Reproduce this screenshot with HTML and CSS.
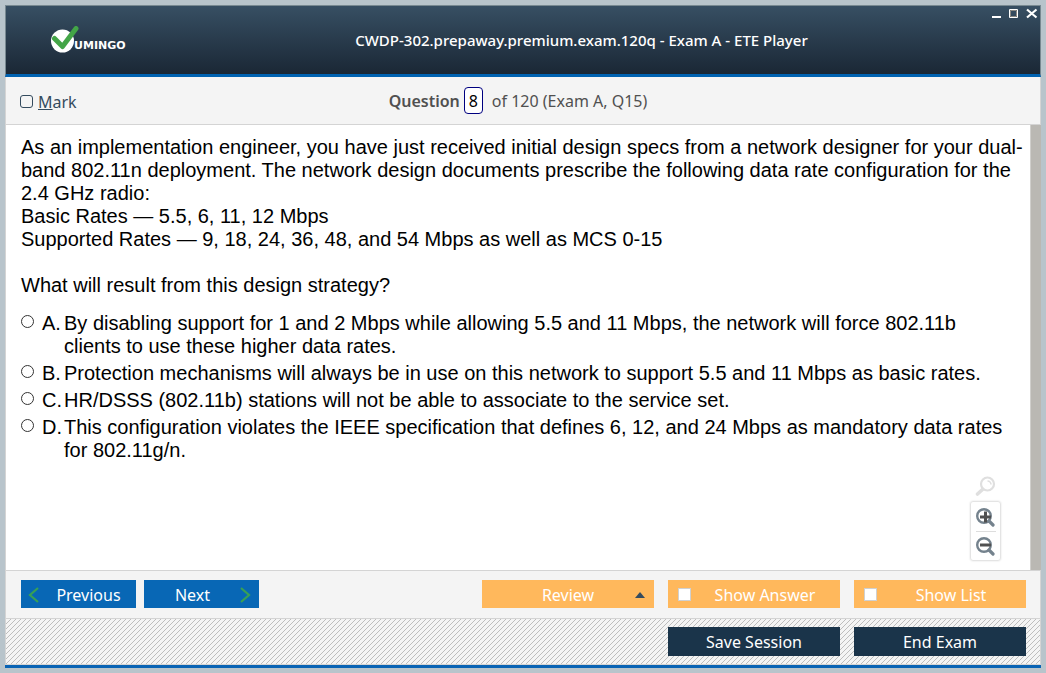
FILE: index.html
```html
<!DOCTYPE html>
<html lang="en">
<head>
<meta charset="utf-8">
<meta name="viewport" content="width=device-width, initial-scale=1">
<title>CWDP-302.prepaway.premium.exam.120q - Exam A - ETE Player</title>
<link rel="stylesheet" href="styles.css">
</head>
<body>
<div class="window">
  <header class="titlebar">
    <svg class="logo" viewBox="0 0 80 28" role="img" aria-label="Vumingo">
      <circle cx="11.500" cy="15" r="11.500" fill="#fff"/>
      <path d="M3.500 12.500 L11.500 20.500 L25 2.500" fill="none" stroke="#43a547" stroke-width="5" stroke-linecap="round" stroke-linejoin="round"/>
      <text class="logo-text" x="23" y="23">UMINGO</text>
    </svg>
    <h1 class="title">CWDP-302.prepaway.premium.exam.120q - Exam A - ETE Player</h1>
    <div class="window-controls">
      <button class="control" type="button" aria-label="Minimize"><svg viewBox="0 0 12 12"><path d="M2 9h9v2H2z" fill="#fff"/></svg></button>
      <button class="control" type="button" aria-label="Maximize"><svg viewBox="0 0 12 12"><path d="M1.500 2.500h8v8h-8z" fill="none" stroke="#fff"/><path d="M2.500 3.500h6v6h-6z" fill="none" stroke="#8c8983"/></svg></button>
      <button class="control" type="button" aria-label="Close"><svg viewBox="0 0 12 12"><path d="M1 2.500 L10.500 10.500 M10.500 2.500 L1 10.500" stroke="#fff" stroke-width="2.200"/></svg></button>
    </div>
  </header>

  <div class="infobar">
    <label class="mark"><input class="mark-box" type="checkbox"><span><u>M</u>ark</span></label>
    <div class="counter">
      <label class="counter-label" for="question-number">Question</label>
      <input class="counter-input" id="question-number" type="text" value="8">
      <span>of 120 (Exam A, Q15)</span>
    </div>
  </div>

  <main class="content">
    <div class="question">
      <p>As an implementation engineer, you have just received initial design specs from a network designer for your dual-<br>band 802.11n deployment. The network design documents prescribe the following data rate configuration for the<br>2.4 GHz radio:</p>
      <p>Basic Rates — 5.5, 6, 11, 12 Mbps</p>
      <p>Supported Rates — 9, 18, 24, 36, 48, and 54 Mbps as well as MCS 0-15</p>
      <p class="prompt">What will result from this design strategy?</p>
      <div class="answers">
        <label class="answer"><input class="radio" type="radio" name="answer"><span>A.</span><span>By disabling support for 1 and 2 Mbps while allowing 5.5 and 11 Mbps, the network will force 802.11b<br>clients to use these higher data rates.</span></label>
        <label class="answer"><input class="radio" type="radio" name="answer"><span>B.</span><span>Protection mechanisms will always be in use on this network to support 5.5 and 11 Mbps as basic rates.</span></label>
        <label class="answer"><input class="radio" type="radio" name="answer"><span>C.</span><span>HR/DSSS (802.11b) stations will not be able to associate to the service set.</span></label>
        <label class="answer"><input class="radio" type="radio" name="answer"><span>D.</span><span>This configuration violates the IEEE specification that defines 6, 12, and 24 Mbps as mandatory data rates<br>for 802.11g/n.</span></label>
      </div>
    </div>
    <div class="scrollbar"></div>
    <div class="zoom">
      <button class="zoom-reset" type="button" aria-label="Reset zoom"><svg viewBox="0 0 22 22"><circle cx="12.500" cy="9" r="6.500" fill="none" stroke="#dfdfdf" stroke-width="2.200"/><path d="M7.500 14.500 L2.500 19" stroke="#dfdfdf" stroke-width="3.600" stroke-linecap="round"/><path d="M12.500 6a3.500 3.500 0 0 1 3.500 3.500" fill="none" stroke="#dfdfdf" stroke-width="1.600"/></svg></button>
      <div class="zoom-group">
        <button class="zoom-button" type="button" aria-label="Zoom in"><svg viewBox="0 0 20 20"><circle cx="8" cy="9" r="6.800" fill="none" stroke="#74828d" stroke-width="2.400"/><path d="M13 14l4 4" stroke="#74828d" stroke-width="3.200" stroke-linecap="round"/><path d="M4 10h11M9.500 4.500v11" stroke="#505050" stroke-width="3"/></svg></button>
        <button class="zoom-button" type="button" aria-label="Zoom out"><svg viewBox="0 0 20 20"><circle cx="8" cy="9" r="6.800" fill="none" stroke="#74828d" stroke-width="2.400"/><path d="M13 14l4 4" stroke="#74828d" stroke-width="3.200" stroke-linecap="round"/><path d="M4 9h11" stroke="#505050" stroke-width="3"/></svg></button>
      </div>
    </div>
  </main>

  <nav class="actions">
    <button class="button nav" type="button"><svg class="chevron" viewBox="0 0 12 18"><path d="M10 2L2 9l8 7" fill="none" stroke="#38a055" stroke-width="2.200"/></svg><span>Previous</span></button>
    <button class="button nav" type="button"><span>Next</span><svg class="chevron" viewBox="0 0 12 18"><path d="M2 2l8 7-8 7" fill="none" stroke="#38a055" stroke-width="2.200"/></svg></button>
    <button class="button option review" type="button"><span>Review</span><svg class="arrow" viewBox="0 0 10 6"><path d="M0 6L5 0l5 6z" fill="#344b5e"/></svg></button>
    <label class="button option"><input class="option-box" type="checkbox"><span>Show Answer</span></label>
    <label class="button option"><input class="option-box" type="checkbox"><span>Show List</span></label>
  </nav>
  <footer class="session">
    <svg class="hatch" aria-hidden="true">
      <defs>
        <pattern id="hatch" width="5" height="5" patternUnits="userSpaceOnUse">
          <path d="M4 0h1v1h-1zM3 1h1v1h-1zM2 2h1v1h-1zM1 3h1v1h-1zM0 4h1v1h-1z" fill="#bdbdbd"/>
        </pattern>
      </defs>
      <rect width="100%" height="100%" fill="url(#hatch)"/>
    </svg>
    <button class="button dark" type="button">Save Session</button>
    <button class="button dark" type="button">End Exam</button>
  </footer>
</div>
</body>
</html>
```
FILE: styles.css
```css
* { box-sizing: border-box; }

body {
  margin: 0;
  height: 100vh;
  padding: 5px;
  background: #b8c4cb;
  font-family: "Noto Sans", sans-serif;
  font-size: 16px;
}

button { padding: 0; border: 0; background: none; font: inherit; }
svg { display: block; }
input { margin: 0; appearance: none; }

.window {
  display: flex;
  flex-direction: column;
  min-height: 100%;
  border-bottom: 3px solid #0863b4;
}

.titlebar {
  display: grid;
  grid-template-columns: 1fr auto 1fr;
  align-items: center;
  height: 72px;
  padding-left: 45px;
  border: 1px solid #788991;
  border-bottom: 3px solid #0062b1;
  background: linear-gradient(#374f63, #1a2735);
  color: #fff;
}

.logo { width: 80px; height: 28px; }

.logo-text {
  fill: #fff;
  font: bold 11px "DejaVu Sans", sans-serif;
}

.title {
  margin: 0;
  padding-left: 72px;
  font-size: 15px;
  font-weight: 500;
}

.window-controls {
  display: flex;
  align-self: start;
  justify-content: flex-end;
  gap: 6px;
  padding: 1px 2px;
}

.control, .control svg { width: 12px; height: 12px; }

.infobar {
  display: grid;
  grid-template-columns: 1fr auto 1fr;
  align-items: center;
  height: 48px;
  padding: 0 24px 0 14px;
  border: 1px solid #d4d4d4;
  border-top: 0;
  background: #f4f4f4;
  color: #505050;
}

.mark {
  display: flex;
  align-items: center;
  gap: 5px;
  padding-top: 2px;
  color: #344b5e;
}

.mark-box {
  width: 13px;
  height: 13px;
  border: 1px solid #344b5e;
  border-radius: 3px;
}

.counter { display: flex; align-items: center; }
.counter-label { font-weight: 600; }

.counter-input {
  width: 19px;
  height: 27px;
  margin: 0 9px 0 4px;
  padding: 0;
  border: 1px solid #000080;
  border-radius: 4px;
  background: #fff;
  color: #000;
  font: inherit;
  text-align: center;
}

.content {
  position: relative;
  display: flex;
  flex: 1;
  border-bottom: 1px solid #d4d4d4;
  border-left: 1px solid #d4d4d4;
  background: #fff;
}

.question {
  flex: 1;
  padding: 11px 0 11px 15px;
  color: #000;
  font: 20px/23px "Liberation Sans", Arial, sans-serif;
}

.question p { margin: 0; }
.question .prompt { margin-top: 23px; }

.answers { display: grid; gap: 4px; padding-top: 15px; }

.answer {
  display: grid;
  grid-template-columns: 21px 22px 1fr;
}

.radio {
  width: 13px;
  height: 13px;
  margin-top: 3px;
  border: 1px solid #333;
  border-radius: 50%;
}

.scrollbar {
  width: 11px;
  border-left: 1px solid #d0cfcc;
  background: #bab8b3;
}

.zoom {
  position: absolute;
  right: 40px;
  bottom: 9px;
  display: grid;
  justify-items: center;
  gap: 4px;
}

.zoom-reset svg { width: 22px; height: 22px; }

.zoom-group {
  display: grid;
  width: 31px;
  padding: 0 5px;
  border: 1px solid #e4e4e4;
  border-radius: 3px;
  box-shadow: 0 0 2px #ddd;
}

.zoom-button { height: 29px; }
.zoom-button + .zoom-button { border-top: 1px solid #ddd; }
.zoom-button svg { width: 20px; height: 20px; }

.actions, .session {
  display: flex;
  gap: 14px;
  padding: 8px 14px 8px 15px;
  border: 1px solid #d4d4d4;
  border-top: 0;
}

.actions {
  height: 48px;
  padding-top: 9px;
  background: #f4f4f4;
}

.button {
  display: grid;
  align-items: center;
  justify-items: center;
  width: 172px;
  height: 28px;
  padding-top: 1px;
  color: #fff;
}

.nav {
  grid-template-columns: 1fr;
  width: 115px;
  background: #0867b5;
}

.nav:first-child { grid-template-columns: 26px 1fr; padding-right: 6px; }
.nav:nth-child(2) { grid-template-columns: 1fr 28px; margin-left: -6px; padding-left: 10px; }
.chevron { width: 12px; height: 18px; }

.option { background: #ffb85c; grid-template-columns: 33px 1fr 11px; }
.review { grid-template-columns: 1fr 28px; padding-left: 28px; margin-left: auto; }
.arrow { width: 10px; height: 6px; }

.option-box {
  width: 13px;
  height: 13px;
  border: 1px solid #d0d0d0;
  background: #fff;
}

.session {
  position: relative;
  justify-content: flex-end;
  height: 46px;
  background: #f4f4f4;
}

.hatch {
  position: absolute;
  inset: 0;
  width: 100%;
  height: 100%;
}

.dark { position: relative; height: 29px; background: #1a344a; }
```
